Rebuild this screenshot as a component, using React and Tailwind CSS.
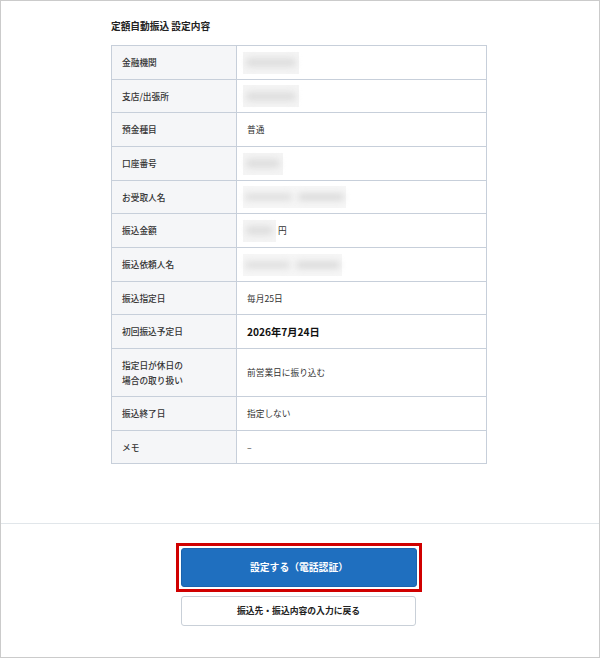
const FONT = { fontFamily: '"Noto Sans CJK JP", "Noto Sans", sans-serif' };

function Blur({ w, two }) {
  if (two) {
    return (
      <div className="ml-[-4px] flex h-[22px] items-center gap-[6px] bg-[#f6f6f6] px-[2px]" style={{ width: w }}>
        <div className="h-[8px] flex-1 rounded-full bg-[#e0e0e0] blur-[3px]" />
        <div className="h-[8px] flex-1 rounded-full bg-[#dcdcdc] blur-[3px]" />
      </div>
    );
  }
  return (
    <div className="ml-[-4px] flex h-[22px] items-center bg-[#f4f4f4] px-[3px]" style={{ width: w }}>
      <div className="h-[9px] w-full rounded-full bg-[#dedede] blur-[3px]" />
    </div>
  );
}

const rows = [
  { label: '金融機関', h: 'h-[34px]', value: <Blur w={56} /> },
  { label: '支店/出張所', h: 'h-[33px]', value: <Blur w={56} /> },
  { label: '預金種目', h: 'h-[34px]', value: <span>普通</span> },
  { label: '口座番号', h: 'h-[34px]', value: <Blur w={40} /> },
  { label: 'お受取人名', h: 'h-[33px]', value: <Blur w={103} two /> },
  {
    label: '振込金額',
    h: 'h-[34px]',
    value: (
      <div className="flex items-center gap-[2px]">
        <Blur w={33} />
        <span>円</span>
      </div>
    ),
  },
  { label: '振込依頼人名', h: 'h-[34px]', value: <Blur w={99} two /> },
  { label: '振込指定日', h: 'h-[33px]', value: <span>毎月25日</span> },
  {
    label: '初回振込予定日',
    h: 'h-[34px]',
    value: <span className="text-[10.2px] font-bold text-[#111]">2026年7月24日</span>,
  },
  {
    label: (
      <>
        指定日が休日の
        <br />
        場合の取り扱い
      </>
    ),
    h: 'h-[48px]',
    value: <span>前営業日に振り込む</span>,
  },
  { label: '振込終了日', h: 'h-[34px]', value: <span>指定しない</span> },
  { label: 'メモ', h: 'h-[33px]', value: <span>–</span> },
];

export default function App() {
  return (
    <div
      className="flex h-[658px] w-[600px] flex-col border border-[#cbcbcb] bg-white text-[#333]"
      style={FONT}
    >
      <div className="flex h-[522px] flex-col pl-[110px] pt-[18px]">
        <h1 className="h-[26px] text-[9.7px] font-bold leading-[14px] text-[#222]">
          定額自動振込 設定内容
        </h1>
        <div className="w-[376px] border-x border-t border-[#c7cfda]">
          {rows.map((r, i) => (
            <div key={i} className={`flex ${r.h} border-b border-[#c7cfda]`}>
              <div className="flex w-[125px] items-center border-r border-[#c7cfda] bg-[#f5f6f8] pl-[10px] text-[8.7px] font-medium leading-[15px] text-[#333]">
                <span>{r.label}</span>
              </div>
              <div className="flex flex-1 items-center pl-[10px] text-[8.7px] leading-[15px] text-[#333]">
                {r.value}
              </div>
            </div>
          ))}
        </div>
      </div>
      <div className="h-px w-full bg-[#e1e6ea]" />
      <div className="flex flex-1 flex-col items-center pt-[19px]">
        <div className="ml-[-2px] border-[3px] border-[#d00000] p-[2px]">
          <button className="flex h-[39px] w-[236px] items-center justify-center rounded-[3px] border border-[#1b63ad] bg-[#1f6fbf] text-[9.8px] font-bold text-white">
            設定する（電話認証）
          </button>
        </div>
        <button className="ml-[-3px] mt-[4px] flex h-[30px] w-[235px] items-center justify-center rounded-[3px] border border-[#c9d0d8] bg-white text-[8.8px] font-bold text-[#222]">
          振込先・振込内容の入力に戻る
        </button>
      </div>
    </div>
  );
}
